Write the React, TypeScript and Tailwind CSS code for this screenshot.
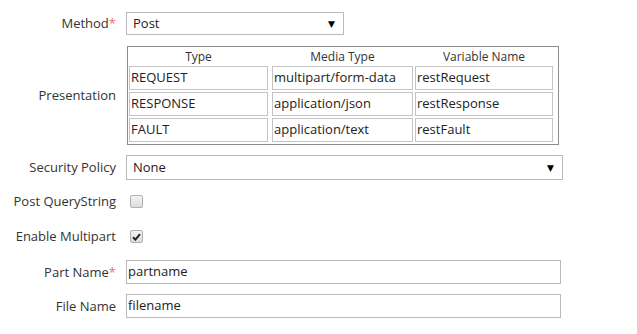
import React from 'react';

const font = { fontFamily: '"Open Sans", "DejaVu Sans", sans-serif' };

function Label({ text, required }: { text: string; required?: boolean }) {
  return (
    <div className="w-[116px] shrink-0 text-right text-[13px] text-[#333] leading-none">
      {text}
      {required && <span className="text-[#ee6b6b]">*</span>}
    </div>
  );
}

function Select({ value, width, height }: { value: string; width: string; height: string }) {
  return (
    <div className={`ml-[10px] flex items-center justify-between border border-[#b9b9b9] bg-white pl-[6px] pr-[8px] text-[13px] text-[#222] ${width} ${height}`}>
      <span>{value}</span>
      <span className="text-[9px] leading-none text-black">▼</span>
    </div>
  );
}

function Cell({ value, width, ml }: { value: string; width: string; ml: string }) {
  return (
    <div className={`flex h-[24px] items-center border border-[#c4c4c4] bg-white pl-[1px] text-[13px] text-[#222] ${width} ${ml}`}>
      {value}
    </div>
  );
}

function Checkbox({ checked }: { checked?: boolean }) {
  return (
    <div className="ml-[14px] flex h-[13px] w-[13px] items-center justify-center rounded-[2px] border border-[#b0b0b0] bg-gradient-to-b from-[#f4f4f4] to-[#dcdcdc]">
      {checked && (
        <svg width="9" height="8" viewBox="0 0 9 8">
          <path d="M1 4.2 L3.4 6.6 L8 1.2" fill="none" stroke="#222" strokeWidth="2" />
        </svg>
      )}
    </div>
  );
}

const rows = [
  ['REQUEST', 'multipart/form-data', 'restRequest'],
  ['RESPONSE', 'application/json', 'restResponse'],
  ['FAULT', 'application/text', 'restFault'],
];

export default function App() {
  return (
    <div className="h-[334px] w-[637px] overflow-hidden bg-white" style={font}>
      <div className="mt-[12px] flex items-center">
        <Label text="Method" required />
        <Select value="Post" width="w-[218px]" height="h-[23px]" />
      </div>

      <div className="mt-[11px] flex items-center">
        <Label text="Presentation" />
        <div className="ml-[11px] h-[99px] w-[432px] border border-[#8c8c8c] bg-white pl-[1px]">
          <div className="flex h-[19px] items-center text-[12px] text-[#333]">
            <div className="w-[139px] text-center">Type</div>
            <div className="ml-[4px] w-[141px] text-center">Media Type</div>
            <div className="ml-[2px] w-[138px] text-center">Variable Name</div>
          </div>
          <div className="flex flex-col gap-[2px]">
            {rows.map(r => (
              <div key={r[0]} className="flex">
                <Cell value={r[0]} width="w-[139px]" ml="ml-0" />
                <Cell value={r[1]} width="w-[141px]" ml="ml-[4px]" />
                <Cell value={r[2]} width="w-[138px]" ml="ml-[2px]" />
              </div>
            ))}
          </div>
        </div>
      </div>

      <div className="mt-[10px] flex items-center">
        <Label text="Security Policy" />
        <Select value="None" width="w-[437px]" height="h-[25px]" />
      </div>

      <div className="mt-[15px] flex items-center">
        <Label text="Post QueryString" />
        <Checkbox />
      </div>

      <div className="mt-[22px] flex items-center">
        <Label text="Enable Multipart" />
        <Checkbox checked />
      </div>

      <div className="mt-[17px] flex items-center">
        <Label text="Part Name" required />
        <div className="ml-[10px] flex h-[24px] w-[435px] items-center border border-[#b9b9b9] pl-[1px] text-[13px] text-[#222]">
          partname
        </div>
      </div>

      <div className="mt-[10px] flex items-center">
        <Label text="File Name" />
        <div className="ml-[10px] flex h-[24px] w-[435px] items-center border border-[#b9b9b9] pl-[1px] text-[13px] text-[#222]">
          filename
        </div>
      </div>
    </div>
  );
}
